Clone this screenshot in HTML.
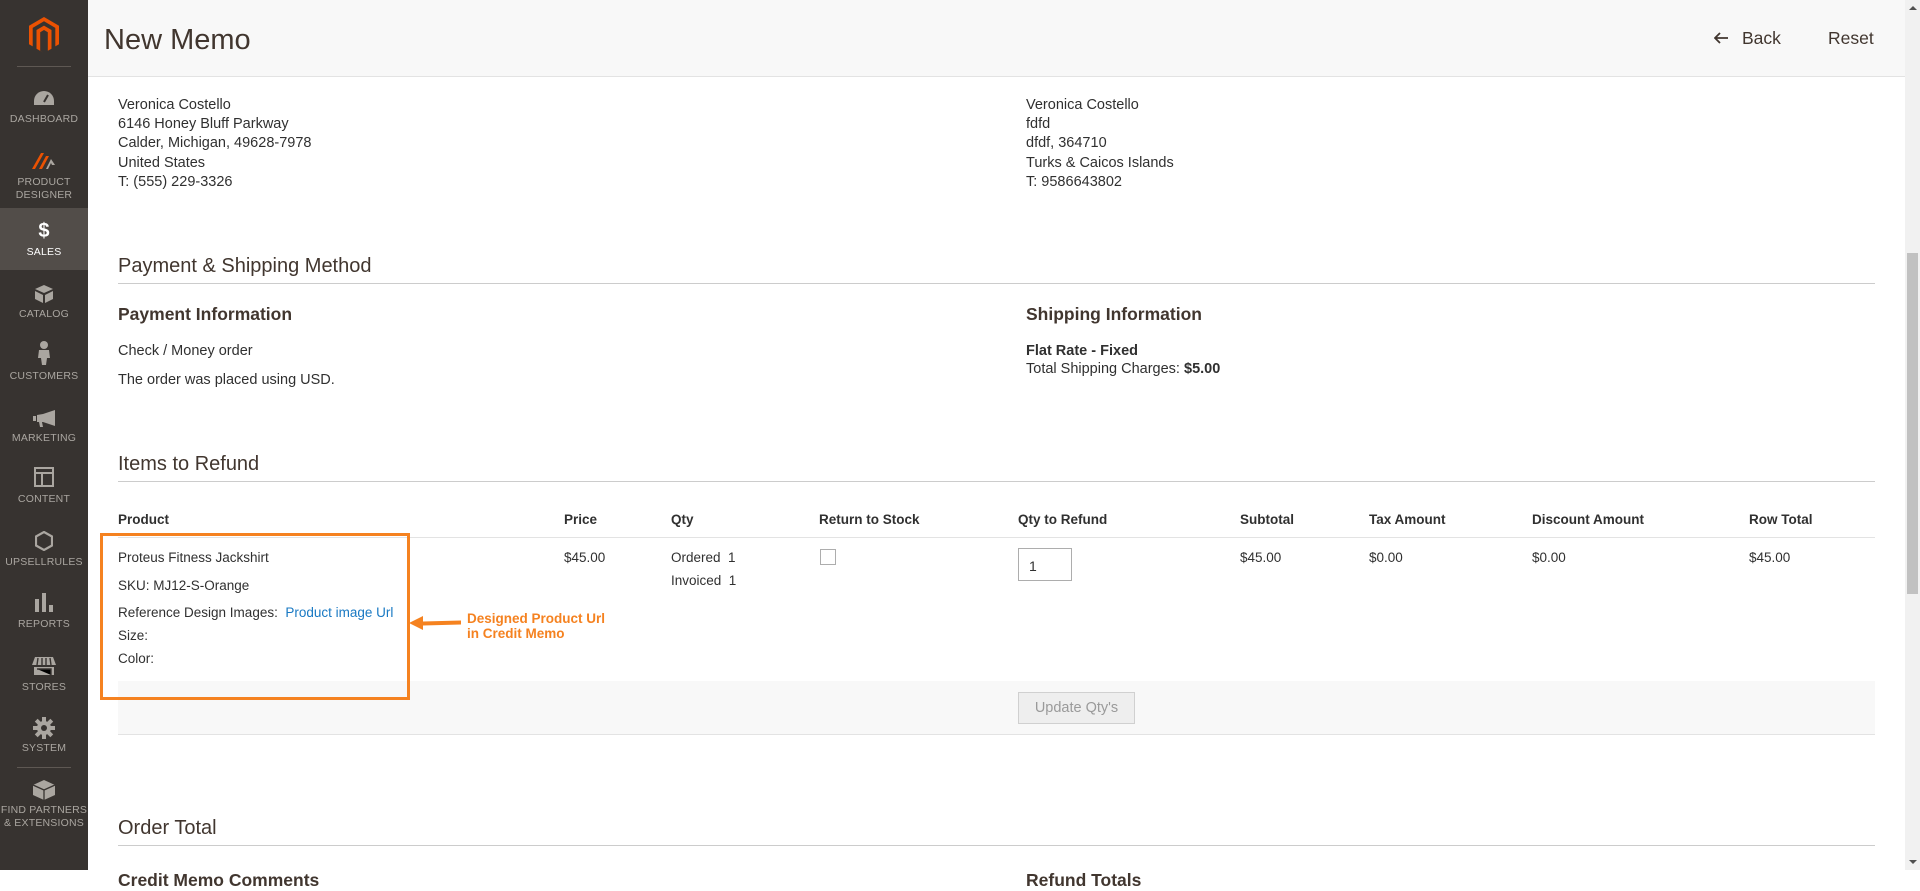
<!DOCTYPE html>
<html><head><meta charset="utf-8"><style>
*{margin:0;padding:0;box-sizing:border-box}
body{width:1920px;height:870px;overflow:hidden;background:#fff;font-family:"Liberation Sans",sans-serif;color:#303030;position:relative;font-size:14.5px}
.a{position:absolute;white-space:nowrap}
#side{position:absolute;left:0;top:0;width:88px;height:870px;background:#373330}
.ni{position:absolute;left:0;width:88px;text-align:center;color:#aaa6a0;font-size:10.5px;line-height:13px;letter-spacing:.2px}
#hdr{position:absolute;left:88px;top:0;width:1817px;height:77px;background:#f8f8f8;border-bottom:1px solid #e3e3e3}
.h2{font-size:20px;color:#41362f}
.h3{font-size:17.5px;font-weight:bold;color:#41362f}
.line{position:absolute;left:118px;width:1757px;height:1px;background:#ccc}
.th{font-weight:bold;font-size:13.5px;top:512px}
.td{font-size:13.5px}
</style></head><body>
<div id="side">
 <svg class="a" style="left:29px;top:17px" width="30" height="36" viewBox="0 0 30 36"><path d="M15 0L30 8.7V27.3L26.3 29.4V10.9L15 4.3 3.7 10.9V29.4L0 27.3V8.7Z M15 8.6L22.5 13V31.7L18.8 33.8V15.2L15 13 11.2 15.2V33.8L15 36 7.5 31.7V13Z" fill="#eb5202"/></svg>
 <div class="a" style="left:17px;top:66px;width:54px;height:1px;background:#5e5853"></div>
 <svg class="a" style="left:33px;top:90px" width="22" height="16" viewBox="0 0 22 16"><path d="M11 1A10 10 0 0 0 1 11v4h20v-4A10 10 0 0 0 11 1z" fill="#aaa6a0"/><path d="M11 12L15 5" stroke="#373330" stroke-width="2"/></svg>
 <div class="ni" style="top:113px">DASHBOARD</div>
 <svg class="a" style="left:32px;top:151px" width="26" height="18" viewBox="0 0 26 18"><path d="M0 18L9 2h3L3 18zM7 18L14 5h3L10 18z" fill="#eb5202"/><path d="M14 18L19 8l4 6h-3l-1-2-3 6z" fill="#aaa6a0"/></svg>
 <div class="ni" style="top:176px">PRODUCT<br>DESIGNER</div>
 <div class="a" style="left:0;top:208px;width:88px;height:62px;background:#524d49"></div>
 <div class="ni" style="top:220px;font-size:20px;font-weight:bold;color:#fff;line-height:22px">$</div>
 <div class="ni" style="top:246px;color:#fff">SALES</div>
 <svg class="a" style="left:35px;top:285px" width="18" height="18" viewBox="0 0 18 18"><path d="M9 0L18 4 9 8 0 4zM0 6l8 4v8L0 14zM18 6l-8 4v8l8-4z" fill="#aaa6a0"/></svg>
 <div class="ni" style="top:308px">CATALOG</div>
 <svg class="a" style="left:37px;top:341px" width="14" height="24" viewBox="0 0 14 24"><circle cx="7" cy="4" r="4" fill="#aaa6a0"/><path d="M2 9h10l1 8h-3l-1 7H5l-1-7H1z" fill="#aaa6a0"/></svg>
 <div class="ni" style="top:370px">CUSTOMERS</div>
 <svg class="a" style="left:33px;top:410px" width="22" height="17" viewBox="0 0 22 17"><path d="M0 6h3v5H0zM4 5l6-1 12-4v16L10 12H4zM6 12h3l1 5H7z" fill="#aaa6a0"/></svg>
 <div class="ni" style="top:432px">MARKETING</div>
 <svg class="a" style="left:34px;top:467px" width="20" height="20" viewBox="0 0 20 20"><path d="M0 0h20v20H0zM2 2v3h16V2zM2 7v11h5V7zm7 0v11h9V7z" fill="#aaa6a0"/></svg>
 <div class="ni" style="top:493px">CONTENT</div>
 <svg class="a" style="left:35px;top:531px" width="18" height="20" viewBox="0 0 18 20"><path d="M9 1L17 5.5v9L9 19 1 14.5v-9z" fill="none" stroke="#aaa6a0" stroke-width="2.2"/></svg>
 <div class="ni" style="top:556px">UPSELLRULES</div>
 <svg class="a" style="left:35px;top:593px" width="18" height="19" viewBox="0 0 18 19"><path d="M0 6h4v13H0zM7 0h4v19H7zM14 12h4v7h-4z" fill="#aaa6a0"/></svg>
 <div class="ni" style="top:618px">REPORTS</div>
 <svg class="a" style="left:32px;top:657px" width="24" height="18" viewBox="0 0 24 18"><path d="M3 0h18l3 8H0zM2 10h20v8H2z" fill="#aaa6a0"/><path d="M6 1L5 8M10 1v7M14 1v7M18 1l1 7M5 12h14v6" stroke="#373330" stroke-width="1.4"/></svg>
 <div class="ni" style="top:681px">STORES</div>
 <svg class="a" style="left:33px;top:717px" width="22" height="22" viewBox="0 0 22 22"><g fill="#aaa6a0"><circle cx="11" cy="11" r="7"/><rect x="9" y="0" width="4" height="22"/><rect x="0" y="9" width="22" height="4"/><rect x="9" y="0" width="4" height="22" transform="rotate(45 11 11)"/><rect x="9" y="0" width="4" height="22" transform="rotate(-45 11 11)"/></g><circle cx="11" cy="11" r="3" fill="#373330"/></svg>
 <div class="ni" style="top:742px">SYSTEM</div>
 <div class="a" style="left:17px;top:767px;width:54px;height:1px;background:#5e5853"></div>
 <svg class="a" style="left:33px;top:780px" width="22" height="20" viewBox="0 0 22 20"><path d="M11 0l11 5v10l-11 5L0 15V5z" fill="#aaa6a0"/><path d="M0 5l11 5 11-5M11 10v10" stroke="#373330" stroke-width="1.3" fill="none"/></svg>
 <div class="ni" style="top:804px">FIND PARTNERS<br>&amp; EXTENSIONS</div>
</div>
<div id="hdr"></div>
<div class="a" style="left:104px;top:24px;font-size:29px;color:#41362f">New Memo</div>
<svg class="a" style="left:1714px;top:32px" width="14" height="12" viewBox="0 0 14 12"><path d="M6 1L1 6l5 5M1 6h13" stroke="#41362f" stroke-width="1.8" fill="none"/></svg>
<div class="a" style="left:1742px;top:28px;font-size:17.5px;color:#41362f">Back</div>
<div class="a" style="left:1828px;top:28px;font-size:17.5px;color:#41362f">Reset</div>
<div class="a" style="left:1905px;top:0;width:15px;height:870px;background:#f1f1f1"></div>
<div class="a" style="left:1907px;top:253px;width:11px;height:341px;background:#c1c1c1"></div>
<div class="a" style="left:1909px;top:6px;width:0;height:0;border:4px solid transparent;border-bottom:4px solid #505050;border-top:0"></div>
<div class="a" style="left:1909px;top:860px;width:0;height:0;border:4px solid transparent;border-top:4px solid #505050;border-bottom:0"></div>

<div class="a" style="left:118px;top:96px;line-height:19.2px">Veronica Costello<br>6146 Honey Bluff Parkway<br>Calder, Michigan, 49628-7978<br>United States<br>T: (555) 229-3326</div>
<div class="a" style="left:1026px;top:96px;line-height:19.2px">Veronica Costello<br>fdfd<br>dfdf, 364710<br>Turks &amp; Caicos Islands<br>T: 9586643802</div>

<div class="a h2" style="left:118px;top:255px">Payment &amp; Shipping Method</div>
<div class="line" style="top:283px"></div>
<div class="a h3" style="left:118px;top:304px">Payment Information</div>
<div class="a" style="left:118px;top:343px">Check / Money order</div>
<div class="a" style="left:118px;top:372px">The order was placed using USD.</div>
<div class="a h3" style="left:1026px;top:304px">Shipping Information</div>
<div class="a" style="left:1026px;top:343px;font-weight:bold">Flat Rate - Fixed</div>
<div class="a" style="left:1026px;top:361px">Total Shipping Charges: <b>$5.00</b></div>

<div class="a h2" style="left:118px;top:453px">Items to Refund</div>
<div class="line" style="top:481px"></div>
<div class="a th" style="left:118px">Product</div>
<div class="a th" style="left:564px">Price</div>
<div class="a th" style="left:671px">Qty</div>
<div class="a th" style="left:819px">Return to Stock</div>
<div class="a th" style="left:1018px">Qty to Refund</div>
<div class="a th" style="left:1240px">Subtotal</div>
<div class="a th" style="left:1369px">Tax Amount</div>
<div class="a th" style="left:1532px">Discount Amount</div>
<div class="a th" style="left:1749px">Row Total</div>
<div class="line" style="top:537px;background:#e3e3e3"></div>

<div class="a td" style="left:118px;top:550px">Proteus Fitness Jackshirt</div>
<div class="a td" style="left:118px;top:578px">SKU: MJ12-S-Orange</div>
<div class="a td" style="left:118px;top:605px">Reference Design Images:&nbsp; <span style="color:#1979c3">Product image Url</span></div>
<div class="a td" style="left:118px;top:628px">Size:</div>
<div class="a td" style="left:118px;top:651px">Color:</div>
<div class="a td" style="left:564px;top:550px">$45.00</div>
<div class="a td" style="left:671px;top:550px">Ordered&nbsp; 1</div>
<div class="a td" style="left:671px;top:573px">Invoiced&nbsp; 1</div>
<div class="a" style="left:820px;top:549px;width:16px;height:16px;border:1px solid #adadad;background:#fff"></div>
<div class="a" style="left:1018px;top:548px;width:54px;height:33px;border:1px solid #adadad;background:#fff;font-size:14px;padding:9px 0 0 10px;color:#303030">1</div>
<div class="a td" style="left:1240px;top:550px">$45.00</div>
<div class="a td" style="left:1369px;top:550px">$0.00</div>
<div class="a td" style="left:1532px;top:550px">$0.00</div>
<div class="a td" style="left:1749px;top:550px">$45.00</div>

<div class="a" style="left:118px;top:681px;width:1757px;height:54px;background:#f8f8f8;border-bottom:1px solid #e3e3e3"></div>
<div class="a" style="left:1018px;top:692px;width:117px;height:32px;background:#eee;border:1px solid #d0d0d0;color:#9a9a9a;font-size:14.5px;text-align:center;line-height:30px">Update Qty's</div>

<div class="a" style="left:100px;top:533px;width:310px;height:167px;border:3px solid #f58220"></div>
<svg class="a" style="left:409px;top:614px" width="60" height="18" viewBox="0 0 60 18"><path d="M0 9L14 2V7.5L52 6.5V10.5L14 11.5V16Z" fill="#f58220"/></svg>
<div class="a" style="left:467px;top:612px;color:#f58220;font-weight:bold;font-size:13.5px;line-height:14.5px">Designed Product Url<br>in Credit Memo</div>

<div class="a h2" style="left:118px;top:817px">Order Total</div>
<div class="line" style="top:845px"></div>
<div class="a h3" style="left:118px;top:870px">Credit Memo Comments</div>
<div class="a h3" style="left:1026px;top:870px">Refund Totals</div>
</body></html>
